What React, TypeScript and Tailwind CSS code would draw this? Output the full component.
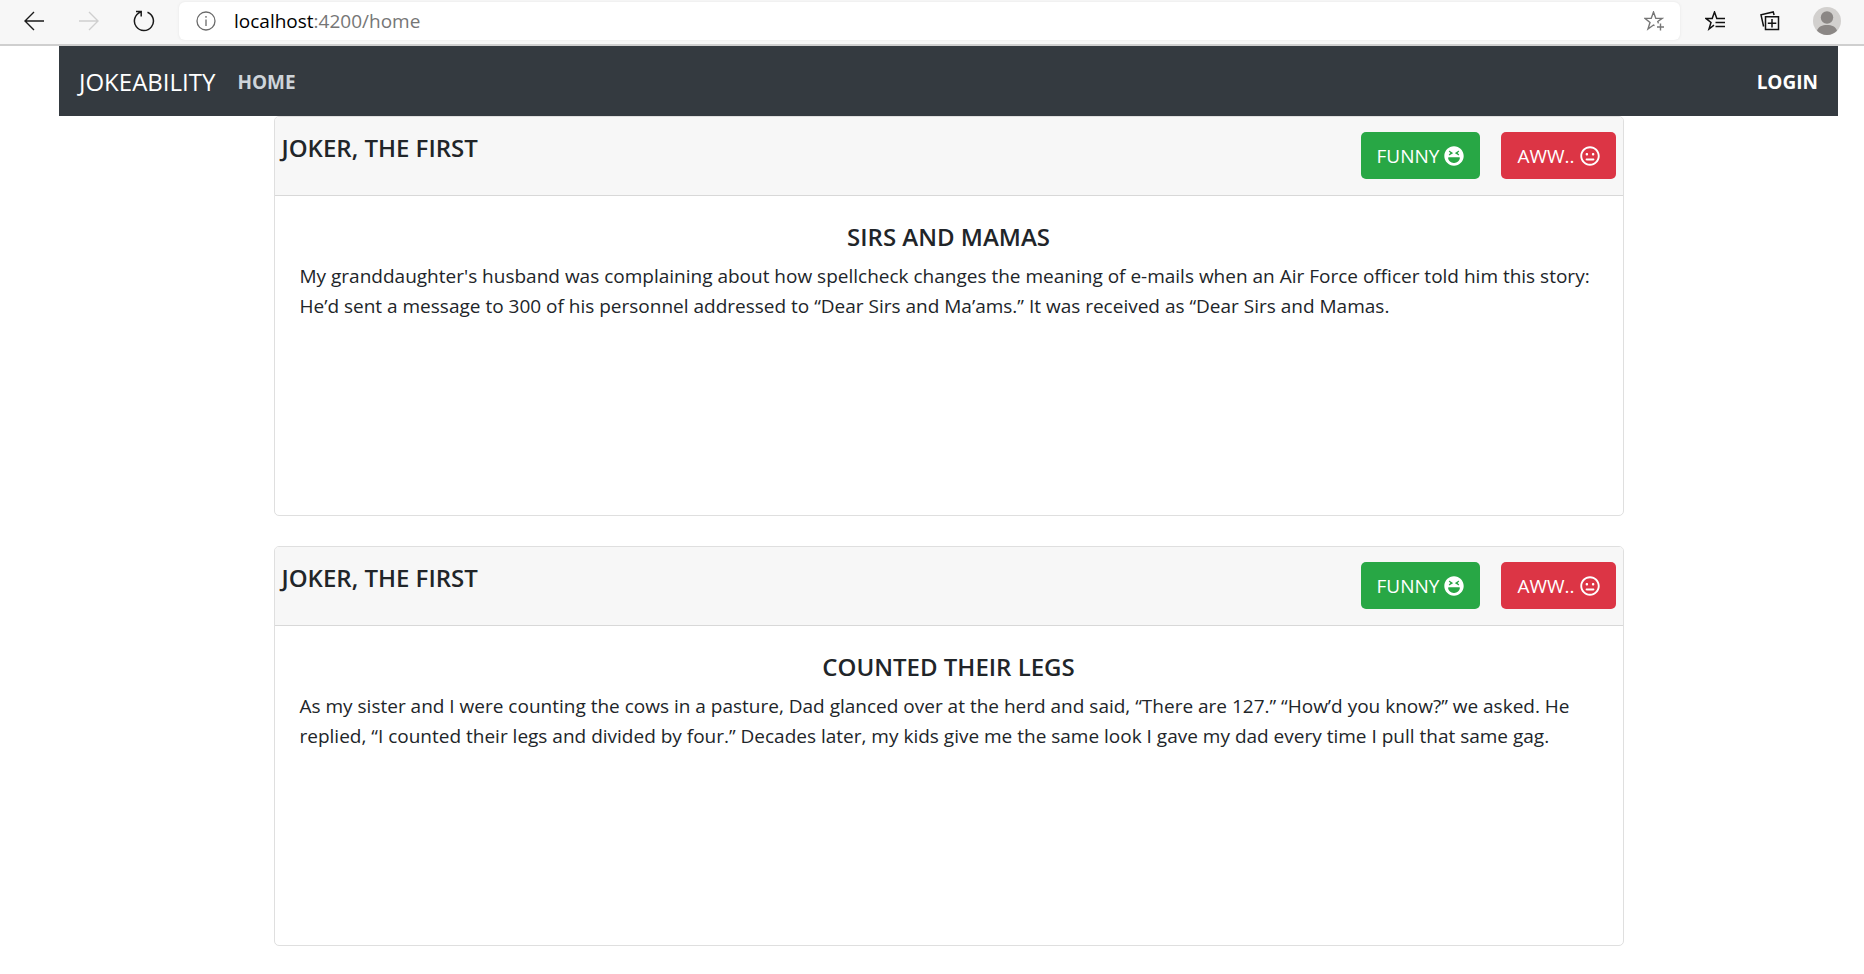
import { FaRegMeh, FaLaughSquint } from "react-icons/fa";

type Joke = { author: string; title: string; body: string };

const jokes: Joke[] = [
  {
    author: "JOKER, THE FIRST",
    title: "SIRS AND MAMAS",
    body: "My granddaughter's husband was complaining about how spellcheck changes the meaning of e-mails when an Air Force officer told him this story: He’d sent a message to 300 of his personnel addressed to “Dear Sirs and Ma’ams.” It was received as “Dear Sirs and Mamas.",
  },
  {
    author: "JOKER, THE FIRST",
    title: "COUNTED THEIR LEGS",
    body: "As my sister and I were counting the cows in a pasture, Dad glanced over at the herd and said, “There are 127.” “How’d you know?” we asked. He replied, “I counted their legs and divided by four.” Decades later, my kids give me the same look I gave my dad every time I pull that same gag.",
  },
];

function Toolbar() {
  return (
    <header className="flex h-[46px] items-center border-b-2 border-[#cfcfcf] bg-[#f7f7f7] pr-[23px] pb-0.5 pl-6">
      <button aria-label="Back" className="text-[#1a1a1a]">
        <svg width="20" height="20" viewBox="0 0 20 20" fill="none" stroke="currentColor" strokeWidth="1.4">
          <path d="M20 10H1M10 1L1 10l9 9" />
        </svg>
      </button>
      <button aria-label="Forward" disabled className="ml-[35px] text-[#cfcfcf]">
        <svg width="20" height="20" viewBox="0 0 20 20" fill="none" stroke="currentColor" strokeWidth="1.4">
          <path d="M0 10h19M10 1l9 9-9 9" />
        </svg>
      </button>
      <button aria-label="Refresh" className="ml-[34px] text-[#1a1a1a]">
        <svg width="22" height="22" viewBox="0 0 22 22" fill="none" stroke="currentColor" strokeWidth="1.5">
          <path d="M14.5 2.2A9.5 9.5 0 1 1 7.6 2.1M3 1.5h5.2v5" />
        </svg>
      </button>
      <div className="mr-5 ml-6 flex h-[38px] flex-1 items-center rounded-md bg-white pr-4 pl-[17px] shadow-[0_0_3px_#e4e4e4]">
        <svg width="20" height="20" viewBox="0 0 20 20" fill="none" stroke="#6b6b6b" strokeWidth="1.3">
          <circle cx="10" cy="10" r="9" />
          <path d="M10 8.5V15M10 5v1.7" />
        </svg>
        <p className="ml-[18px] flex-1 text-[19px] text-[#767676]">
          <span className="text-black">localhost</span>:4200/home
        </p>
        <button aria-label="Add to favorites" className="text-[#767676]">
          <svg width="20" height="20" viewBox="0 0 20 20" fill="none" stroke="currentColor" strokeWidth="1.4">
            <path d="M10.500 14.600L9.500 14 4 18l2-6.600L.9 7.400h6.300L9.500 1l2.300 6.400h6.300L13.800 10.500l.6 1.900M16.500 12.500v7M13 16h7" />
          </svg>
        </button>
      </div>
      <div className="flex items-center text-[#111]">
        <button aria-label="Favorites" className="ml-[5px]">
          <svg width="20" height="20" viewBox="0 0 20 20" fill="none" stroke="currentColor" strokeWidth="1.5">
            <path d="M9 14.2L4 18l2-6.6L.9 7.4h6.3L9.5 1l2.3 6.400H20M10.500 11.500H20M10.500 15.500H20" />
          </svg>
        </button>
        <button aria-label="Collections" className="ml-[35px]">
          <svg width="20" height="20" viewBox="0 0 20 20" fill="none" stroke="currentColor" strokeWidth="1.5">
            <path d="M5.500 5.800h13v12.700h-13zM12 8v8.500M7.800 12.200h8.500M3.600 15.500L1 3.800 13.200 1l.9 3" />
          </svg>
        </button>
        <button aria-label="Profile" className="ml-[33px]">
          <svg width="28" height="28" viewBox="0 0 28 28">
            <circle cx="14" cy="14" r="14" fill="#d2d0ce" />
            <circle cx="14" cy="10.5" r="6.200" fill="#8b8785" />
            <path d="M4 23.800C5.500 19.500 9 18 14 18s8.500 1.500 10 5.800A14 14 0 0 1 4 23.800z" fill="#8b8785" />
          </svg>
        </button>
      </div>
    </header>
  );
}

function JokeCard({ joke }: { joke: Joke }) {
  return (
    <article className="mb-[30px] min-h-[400px] rounded-[5px] border border-[#dfdfdf] bg-white">
      <div className="flex items-start justify-between rounded-t-[4px] border-b border-[#d8d8d8] bg-[#f7f7f7] pt-[15px] pr-[7px] pb-4 pl-[7px]">
        <h2 className="text-[24px] leading-8 font-semibold">{joke.author}</h2>
        <div className="flex gap-[21px] text-[19px] leading-[30px] text-white">
          <button className="flex h-[47px] items-center gap-[5px] rounded-[5px] bg-[#28a745] px-4">
            FUNNY <FaLaughSquint size={20} />
          </button>
          <button className="flex h-[47px] items-center gap-[5px] rounded-[5px] bg-[#dc3545] px-4">
            AWW.. <FaRegMeh size={20} />
          </button>
        </div>
      </div>
      <div className="px-[25px] pt-[25px]">
        <h3 className="mb-2 text-center text-[24px] leading-8 font-semibold">{joke.title}</h3>
        <p className="text-[19px] leading-[30px]">{joke.body}</p>
      </div>
    </article>
  );
}

export default function App() {
  return (
    <div className="font-['Open_Sans','Noto_Sans',sans-serif] text-[#212529]">
      <Toolbar />
      <div className="mr-[26px] ml-[59px]">
        <nav className="flex h-[70px] items-center bg-[#343a40] px-5 pt-0.5">
          <a href="#home" className="text-[24px] text-white">JOKEABILITY</a>
          <a href="#home" className="ml-[22px] text-[19px] font-bold text-[#ced4da]">HOME</a>
          <a href="#login" className="ml-auto text-[19px] font-bold text-white">LOGIN</a>
        </nav>
        <main className="mx-auto max-w-[1350px]">
          {jokes.map((joke) => (
            <JokeCard key={joke.title} joke={joke} />
          ))}
        </main>
      </div>
    </div>
  );
}
